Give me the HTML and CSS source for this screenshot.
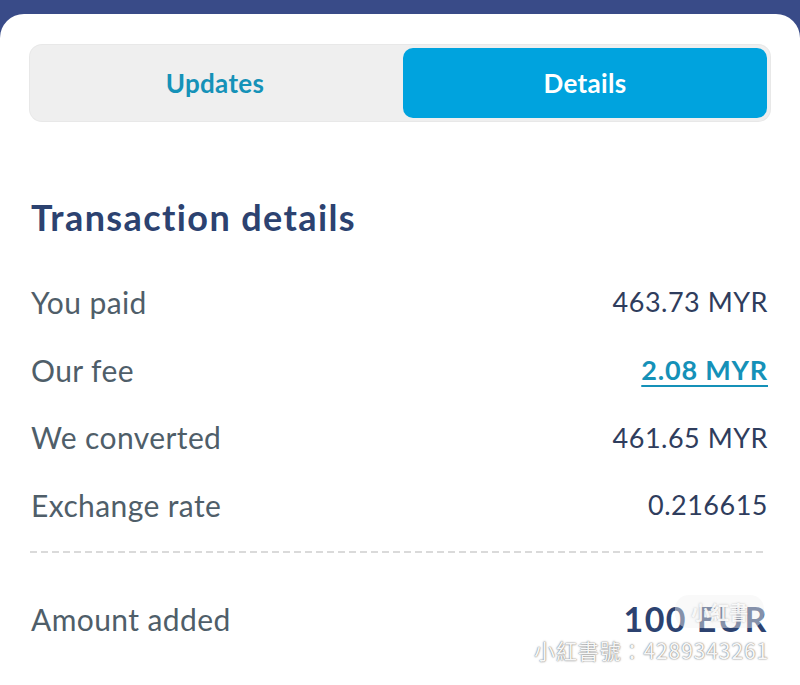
FILE: index.html
```html
<!DOCTYPE html>
<html lang="en">
<head>
<meta charset="utf-8">
<title>Transaction details</title>
<link rel="stylesheet" href="styles.css">
</head>
<body>
<div class="card">
  <div class="tabs">
    <div class="tab">Updates</div>
    <div class="tab active">Details</div>
  </div>
  <h1 class="title">Transaction details</h1>
  <div class="rows">
    <div class="row"><span class="label">You paid</span><span class="value">463.73 MYR</span></div>
    <div class="row"><span class="label">Our fee</span><span class="value link">2.08 MYR</span></div>
    <div class="row"><span class="label">We converted</span><span class="value">461.65 MYR</span></div>
    <div class="row"><span class="label">Exchange rate</span><span class="value">0.216615</span></div>
  </div>
  <div class="divider"></div>
  <div class="row total"><span class="label">Amount added</span><span class="value big">100 EUR</span></div>
  <div class="wm-logo">小紅書</div>
  <div class="wm-text">小紅書號：4289343261</div>
</div>
</body>
</html>
```
FILE: styles.css
```css
html, body {
  margin: 0;
  padding: 0;
}
body {
  background: #394b88;
  font-family: "Lato", "Noto Sans", sans-serif;
  height: 685px;
  overflow: hidden;
}
.card {
  position: relative;
  margin-top: 14px;
  background: #ffffff;
  border-radius: 24px 24px 0 0;
  height: 671px;
  padding: 31px 30px 0 30px;
  box-sizing: border-box;
}
.tabs {
  display: grid;
  grid-template-columns: 1fr 1fr;
  gap: 6px;
  height: 76px;
  padding: 3px;
  box-sizing: border-box;
  background: #efefef;
  border-radius: 12px;
  box-shadow: 0 0 0 1px #e8e8e8;
}
.tab {
  display: flex;
  align-items: center;
  justify-content: center;
  font-size: 26px;
  font-weight: 700;
  color: #1592b8;
  border-radius: 10px;
  letter-spacing: 0.3px;
}
.tab.active {
  background: #00a3de;
  color: #ffffff;
}
.title {
  margin: 74px 0 0 1px;
  font-size: 36px;
  font-weight: 700;
  color: #2c4270;
  line-height: 44px;
  letter-spacing: 1.4px;
}
.rows {
  margin-top: 29px;
  display: flex;
  flex-direction: column;
}
.row {
  display: flex;
  justify-content: space-between;
  align-items: center;
  height: 67.7px;
  padding: 0 2px 0 1px;
}
.label {
  font-size: 30px;
  color: #4f5e69;
  letter-spacing: 0.4px;
}
.value {
  font-size: 27px;
  color: #2f3d5d;
  letter-spacing: 0.5px;
}
.value.link {
  color: #1591b8;
  font-weight: 700;
  letter-spacing: 0.8px;
  text-decoration: underline;
  text-decoration-thickness: 2px;
  text-underline-offset: 5px;
}
.divider {
  margin: 12px 3px 0 0;
  height: 2px;
  background: repeating-linear-gradient(to right, #dadada 0 7px, transparent 7px 11px);
}
.total {
  margin-top: 32px;
}
.value.big {
  font-size: 34px;
  font-weight: 700;
  color: #2c4270;
  letter-spacing: 1.5px;
}
.wm-logo {
  position: absolute;
  left: 675px;
  top: 581px;
  width: 89px;
  height: 33px;
  border-radius: 14px;
  background: rgba(242, 242, 242, 0.45);
  color: rgba(255, 255, 255, 0.9);
  font-family: "Noto Sans CJK SC", sans-serif;
  font-weight: 700;
  font-size: 19px;
  display: flex;
  align-items: center;
  justify-content: center;
  text-shadow: 0 0 2px rgba(120, 120, 120, 0.5);
}
.wm-text {
  position: absolute;
  left: 534px;
  top: 621px;
  font-family: "Noto Sans CJK TC", sans-serif;
  font-size: 21px;
  letter-spacing: 0.9px;
  color: rgba(255, 255, 255, 0.95);
  text-shadow: 0 0 2px rgba(110, 110, 110, 0.8), 0 0 1px rgba(110, 110, 110, 0.8);
}
```
